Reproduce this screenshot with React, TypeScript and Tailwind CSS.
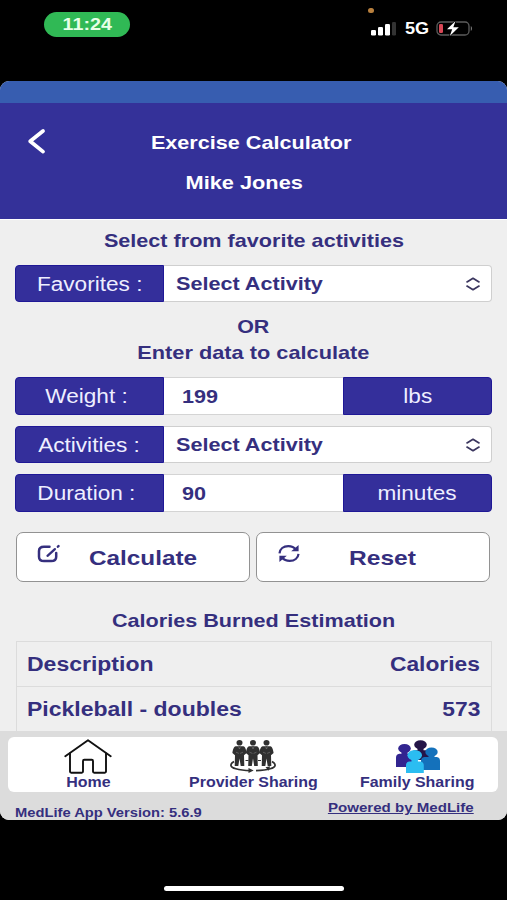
import type { ReactNode } from 'react';

const StatusBar = () => (
  <header className="relative flex h-[81px] shrink-0 items-start justify-between pl-11 pr-[34px]">
    <div className="mt-3 flex h-[25px] w-[86px] items-center justify-center rounded-full bg-[#30b955]">
      <span className="origin-center scale-x-[1.16] text-[17px] font-bold leading-none text-[#e8ffe8]">
        11:24
      </span>
    </div>
    <span className="absolute left-[368px] top-2 h-[5px] w-1.5 rounded-full bg-[#b9803e]" />
    <div className="mt-5 flex h-[17px] items-center">
      <svg width="26" height="15" viewBox="0 0 26 15" fill="#fff">
        <rect x="0" y="9" width="5" height="5.5" rx="1.3" />
        <rect x="7" y="6" width="5" height="8.5" rx="1.3" />
        <rect x="14" y="3" width="5" height="11.5" rx="1.3" />
        <rect x="21" y="1" width="4" height="13.5" rx="1.3" fill="#333" />
      </svg>
      <span className="ml-2 w-6 origin-left scale-x-[1.13] text-base font-bold leading-none text-white">
        5G
      </span>
      <svg className="ml-[7px]" width="37" height="17" viewBox="0 0 37 17">
        <rect x="1" y="2" width="32" height="13" rx="4" fill="none" stroke="#5c5c5c" strokeWidth="1.3" />
        <path d="M34.8 6v5c1.6-.7 1.6-4.3 0-5Z" fill="#777" />
        <rect x="3" y="4" width="4" height="9" rx="1.2" fill="#d84756" />
        <path
          d="M19.5 1 11 9.3h5.2L13.8 16l9-8.8h-5.5L19.5 1Z"
          fill="#fff"
          stroke="#000"
          strokeWidth="1.5"
          paintOrder="stroke"
        />
      </svg>
    </div>
  </header>
);

const SelectArrows = () => (
  <svg
    width="16"
    height="14"
    viewBox="0 0 16 14"
    fill="none"
    stroke="#3b365f"
    strokeWidth="1.8"
    strokeLinecap="round"
    strokeLinejoin="round"
  >
    <path d="m2 4.9 6-3.6 6 3.6M2 9.1l6 3.6 6-3.6" />
  </svg>
);

const FieldLabel = ({ children, className }: { children: ReactNode; className: string }) => (
  <div
    className={`flex w-[149px] shrink-0 items-center justify-center border border-[#1f1896] bg-[#342f9b] text-xl text-[#eeeeff] ${className}`}
  >
    <span className="scale-x-[1.13] whitespace-nowrap leading-none">{children}</span>
  </div>
);

const SelectField = ({ label }: { label: string }) => (
  <div className="flex h-[37px]">
    <FieldLabel className="rounded-l-[4px]">{label}</FieldLabel>
    <button className="flex flex-1 items-center justify-between rounded-r-[4px] border border-l-0 border-[#cfcfcf] bg-white pl-3 pr-2.5">
      <span className="origin-left scale-x-[1.137] text-[19px] font-bold leading-none">
        Select Activity
      </span>
      <SelectArrows />
    </button>
  </div>
);

const InputField = ({ label, value, unit }: { label: string; value: string; unit: string }) => (
  <div className="flex h-[38px]">
    <FieldLabel className="rounded-l-[4px] pr-[7px]">{label}</FieldLabel>
    <div className="flex flex-1 items-center border-y border-[#d4d4d4] bg-white pl-[18px]">
      <span className="origin-left scale-x-[1.137] text-[19px] font-bold leading-none">{value}</span>
    </div>
    <FieldLabel className="rounded-r-[4px]">{unit}</FieldLabel>
  </div>
);

const CalculateIcon = () => (
  <svg width="24" height="20" viewBox="0 0 24 20" fill="none" stroke="#352f7e" strokeLinecap="round">
    <path
      d="M12.5 2.7H7C3.8 2.7 2 4.2 2 7v5.7c0 2.9 1.8 4.4 5 4.4h7.2c3.2 0 5-1.5 5-4.4V9"
      strokeWidth="2.5"
    />
    <path d="m10.5 11.8 7.4-6.7" strokeWidth="2.3" />
    <path d="m20.9 2.6.6-.5" strokeWidth="2.5" />
  </svg>
);

const ResetIcon = () => (
  <svg width="22" height="20" viewBox="0 0 22 20" fill="none" stroke="#352f7e" strokeWidth="2.2">
    <path d="M1.5 9.3C1.9 5 5.4 2.2 10.3 2.2c3.3 0 6 1.3 7.7 3.4" />
    <path d="M20.5 9.8c-.4 4.3-3.9 7.1-8.8 7.1-3.3 0-6-1.3-7.7-3.4" />
    <path d="M20.6 1v6.3h-7.4ZM1.4 18.1v-6.3h7.4Z" fill="#352f7e" stroke="none" />
  </svg>
);

const HomeIcon = () => (
  <svg
    width="48"
    height="35"
    viewBox="0 0 48 35"
    fill="none"
    stroke="#111"
    strokeWidth="1.9"
    strokeLinecap="round"
    strokeLinejoin="round"
  >
    <path d="M1.3 17.2 24 1.2l22.7 16" />
    <path d="M6 14.4v18.1c0 .8.4 1.2 1.2 1.2h10.6c.8 0 1.2-.4 1.2-1.2V22c0-.9.4-1.3 1.3-1.3h7.4c.9 0 1.3.4 1.3 1.3v10.5c0 .8.4 1.2 1.2 1.2h10.6c.8 0 1.2-.4 1.2-1.2V14.4" />
  </svg>
);

const Provider = ({ x }: { x: number }) => (
  <g transform={`translate(${x} 0)`}>
    <ellipse cx="0" cy="2.8" rx="3" ry="2.8" />
    <path d="M-3.8 6.2h7.6c2 .2 3 4.3 3.3 6.8l-2.6 2.2.3 10.8H1.2L0 18.5-1.2 26h-3.6l.3-10.8L-7.1 13c.3-2.5 1.3-6.6 3.3-6.8Z" />
    <path d="m-1 6.6 1 2.4 1-2.4M-3.5 12.2l2.9 1.2M3.5 12.2l-2.9 1.2" stroke="#888" strokeWidth=".5" />
  </g>
);

const ProviderIcon = () => (
  <svg width="48" height="33" viewBox="0 0 48 33" fill="#303030">
    <path
      d="M5 21.5C.5 24.2.8 27 6.8 28.8c4.2 1.3 9.2 1.8 14.7 1.9M43 21.5c4.5 2.7 4.2 5.5-1.8 7.3-3.7 1.1-7.5 1.6-14.2 1.9"
      fill="none"
      stroke="#303030"
      strokeWidth="1.7"
    />
    <path d="m19.5 28 5.2 2.6-5.2 2.4ZM36.5 27.3l4.7-1-1.5 4.4Z" />
    <path d="M16.5 20.5h3M29 20.5h3" stroke="#303030" />
    <Provider x={10.5} />
    <Provider x={37.5} />
    <Provider x={24} />
  </svg>
);

const FamilyIcon = () => (
  <svg width="46" height="34" viewBox="0 0 46 34">
    <g fill="#241548">
      <ellipse cx="25.5" cy="4.8" rx="6.3" ry="4.6" />
      <path d="M22.5 7h6v3.2h3c2 .3 2.5 2 2.5 4V20H17v-5.8c0-2 .5-3.7 2.5-4h3Z" />
    </g>
    <g fill="#322590">
      <ellipse cx="9.5" cy="8.6" rx="6.3" ry="4.6" />
      <path d="M6.5 11h6v2.8h2.8c2.4.3 3.4 2 3.4 4V27H1v-9.2c0-2 1-3.7 3.4-4h2.1Z" />
    </g>
    <g fill="#1471bb">
      <ellipse cx="36.5" cy="12" rx="6.2" ry="4.5" />
      <path d="M33.5 14h6v2.9h2.3c2.3.3 3.2 2 3.2 3.8V30H26v-9.3c0-1.8 1-3.5 3.3-3.8h4.2Z" />
    </g>
    <g fill="#2bbdf1">
      <ellipse cx="19.7" cy="15.2" rx="7.3" ry="5.2" />
      <path d="M16.5 18h6.4v3.4h2.4c2.4.3 3.5 1.9 3.5 4V33H11v-7.6c0-2.1 1-3.7 3.3-4h2.2Z" />
    </g>
  </svg>
);

const rows = [
  { description: 'Description', calories: 'Calories' },
  { description: 'Pickleball - doubles', calories: '573' },
];

const navItems = [
  { name: 'Home', icon: HomeIcon, width: 'w-[160px]' },
  { name: 'Provider Sharing', icon: ProviderIcon, width: 'w-[170px]' },
  { name: 'Family Sharing', icon: FamilyIcon, width: 'w-[159px]' },
];

const App: React.FC = () => {
  return (
    <div className="flex h-[900px] w-[507px] flex-col overflow-hidden bg-black font-['Liberation_Sans',Arial,sans-serif] text-[#352f7e]">
      <StatusBar />

      <div className="flex h-[739px] shrink-0 flex-col overflow-hidden rounded-[9px] bg-[#efefef]">
        <div className="h-[22px] shrink-0 bg-[#375db0]" />

        {/* Header */}
        <div className="flex h-[116px] shrink-0 bg-[#343199] text-white">
          <button className="h-[75px] w-16 shrink-0 pl-[27px]" aria-label="Back">
            <svg width="20" height="28" viewBox="0 0 20 28" fill="none" stroke="#fff" strokeWidth="3.8">
              <path d="M16 4 3.2 14.2 16 24.6" strokeLinejoin="round" strokeLinecap="round" />
            </svg>
          </button>
          <div className="flex w-[374px] flex-col items-center pt-[30px] text-[19px] font-bold">
            <h1 className="scale-x-[1.137] leading-5">Exercise Calculator</h1>
            <p className="mr-[13px] mt-5 scale-x-[1.145] leading-5">Mike Jones</p>
          </div>
        </div>

        {/* Form */}
        <main className="h-[512px] shrink-0 overflow-hidden border-t border-white pl-[15px] pr-[15px]">
          <h2 className="mt-[11px] flex justify-center text-[19px] font-bold leading-5">
            <span className="scale-x-[1.137]">Select from favorite activities</span>
          </h2>
          <div className="mt-3.5">
            <SelectField label="Favorites :" />
          </div>

          <div className="mt-[15px] flex flex-col items-center gap-1.5 text-[19px] font-bold leading-5">
            <span className="scale-x-[1.13]">OR</span>
            <span className="scale-x-[1.145]">Enter data to calculate</span>
          </div>

          <div className="mt-3.5 flex flex-col gap-[11px]">
            <InputField label="Weight :" value="199" unit="lbs" />
            <SelectField label="Activities :" />
            <InputField label="Duration :" value="90" unit="minutes" />
          </div>

          <div className="mt-5 flex gap-1.5 pl-px text-[21px] font-bold">
            <button className="flex h-[50px] w-[234px] items-center rounded-[7px] border border-[#929292] bg-white pl-5">
              <span className="mb-1.5">
                <CalculateIcon />
              </span>
              <span className="ml-7 origin-left scale-x-[1.157] leading-none">Calculate</span>
            </button>
            <button className="flex h-[50px] w-[234px] items-center rounded-[7px] border border-[#929292] bg-white pl-[21px]">
              <span className="mb-1.5">
                <ResetIcon />
              </span>
              <span className="ml-[49px] origin-left scale-x-[1.17] leading-none">Reset</span>
            </button>
          </div>

          <h2 className="mt-[29px] flex justify-center text-[19px] font-bold leading-5">
            <span className="scale-x-[1.137]">Calories Burned Estimation</span>
          </h2>

          <div className="ml-px mt-2.5 border border-[#dcdcdc] text-xl font-bold">
            {rows.map((row) => (
              <div
                key={row.description}
                className="flex h-[45px] items-center justify-between border-b border-[#dcdcdc] pl-2.5 pr-[11px]"
              >
                <span className="origin-left scale-x-[1.15]">{row.description}</span>
                <span className="origin-right scale-x-[1.14]">{row.calories}</span>
              </div>
            ))}
          </div>
        </main>

        {/* Footer */}
        <footer className="flex-1 bg-[#dcdcdc] pt-1.5">
          <nav className="ml-2 flex h-[55px] w-[490px] rounded-[6px] bg-white">
            {navItems.map((item) => {
              const Icon = item.icon;

              return (
                <button key={item.name} className={`flex flex-col items-center pt-[2px] ${item.width}`}>
                  <span className="flex h-[35px] items-center">
                    <Icon />
                  </span>
                  <span className="scale-x-[1.14] whitespace-nowrap text-sm font-bold leading-4">
                    {item.name}
                  </span>
                </button>
              );
            })}
          </nav>
          <div className="flex justify-between pl-[15px] pr-[33px] text-[13px] font-bold leading-4">
            <span className="mt-[13px] origin-left scale-x-[1.132]">MedLife App Version: 5.6.9</span>
            <a href="#" className="mt-2 origin-right scale-x-[1.16] underline">
              Powered by MedLife
            </a>
          </div>
        </footer>
      </div>

      {/* Home indicator */}
      <div className="mx-auto mt-[66px] h-[5px] w-[180px] rounded-full bg-white" />
    </div>
  );
};

export default App;
